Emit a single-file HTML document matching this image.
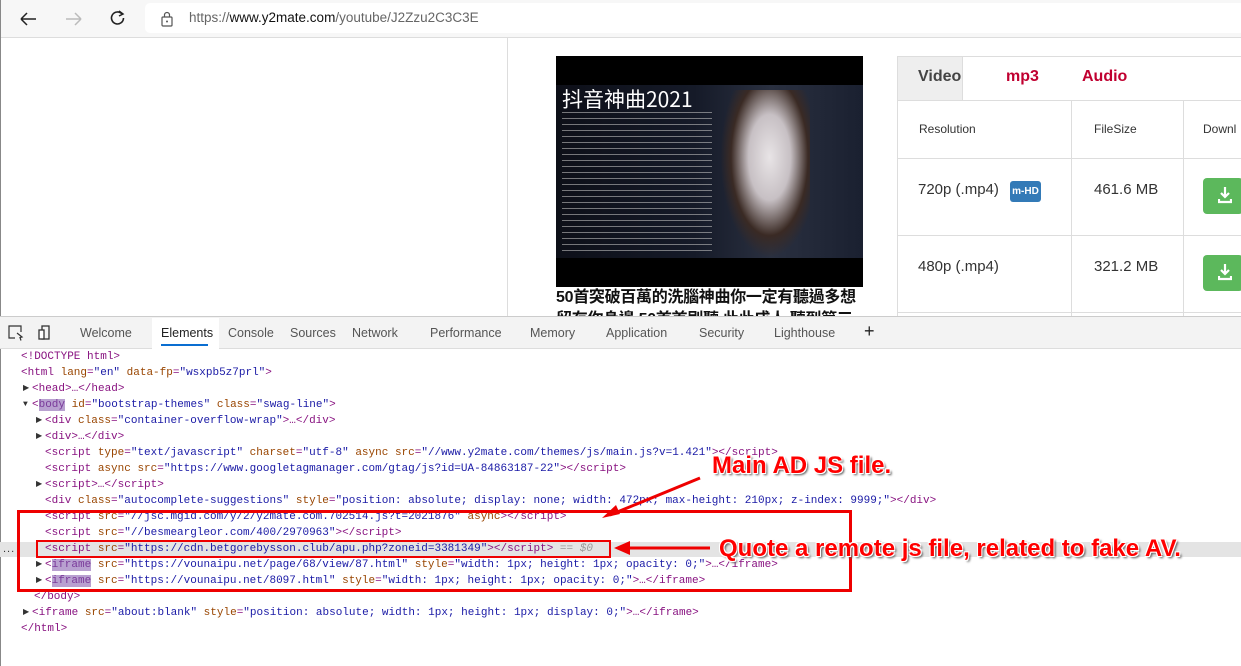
<!DOCTYPE html>
<html><head><meta charset="utf-8"><style>
*{margin:0;padding:0;box-sizing:border-box}
body{width:1241px;height:666px;overflow:hidden;background:#fff;font-family:"Liberation Sans",sans-serif;position:relative}
.a{position:absolute}
.l{position:absolute;font-family:"Liberation Mono",monospace;font-size:11px;line-height:16px;white-space:pre;color:#881280}
.tr{position:absolute;font-size:8px;color:#333;margin-left:-9px;line-height:16px}
.t{color:#881280}.n{color:#994500}.v{color:#1a1aa6}
.tab{position:absolute;top:326px;font-size:12.5px;color:#555}
.lbl{position:absolute;font-family:"Liberation Sans",sans-serif;font-weight:bold;color:#f00;font-size:24px;text-shadow:1px 1px 0 #fff,-1px -1px 0 #fff,1px -1px 0 #fff,-1px 1px 0 #fff,2px 2px 2px #555;white-space:nowrap}
.hl{background:#b8a0d0;color:#7a3a9a}
</style></head><body>
<div class="a" style="left:0;top:0;width:1241px;height:38px;background:#f7f7f7;border-bottom:1px solid #ddd"></div>
<div class="a" style="left:0;top:0;width:1px;height:666px;background:#888"></div>
<svg class="a" style="left:18px;top:8px" width="110" height="22" viewBox="0 0 110 22">
<path d="M3 11h15M3 11l6-6M3 11l6 6" stroke="#222" stroke-width="1.5" fill="none"/>
<path d="M48 11h15M63 11l-6-6M63 11l-6 6" stroke="#bbb" stroke-width="1.5" fill="none"/>
<path d="M104 6a6 6 0 1 0 1.5 4" stroke="#222" stroke-width="1.6" fill="none"/><path d="M101 3l4 3-4 2" stroke="#222" stroke-width="1.5" fill="none"/>
</svg>
<div class="a" style="left:145px;top:3px;width:1100px;height:30px;background:#fff;border-radius:5px"></div>
<svg class="a" style="left:160px;top:11px" width="14" height="16"><rect x="2" y="6" width="10" height="9" rx="1" fill="none" stroke="#555" stroke-width="1.2"/><path d="M4.5 6V4a2.5 2.5 0 0 1 5 0v2" fill="none" stroke="#555" stroke-width="1.2"/><circle cx="7" cy="10.5" r="1" fill="#555"/></svg>
<div class="a" style="left:189px;top:10px;font-size:13.5px;color:#666">https://<span style="color:#111">www.y2mate.com</span>/youtube/J2Zzu2C3C3E</div>
<div class="a" style="left:507px;top:38px;width:1px;height:280px;background:#ddd"></div>
<div class="a" style="left:556px;top:56px;width:307px;height:231px;background:#000"></div>
<div class="a" style="left:556px;top:85px;width:307px;height:173px;background:linear-gradient(90deg,#0d0f18 0%,#151a28 45%,#2a3040 70%,#1a2030 100%)"></div>
<div class="a" style="left:720px;top:90px;width:90px;height:168px;background:radial-gradient(ellipse at 55% 40%,#e8e4e6 0%,#c7c0c4 30%,#3a2a24 55%,transparent 70%)"></div>
<div class="a" style="left:562px;top:84px;color:#fff;font-size:21px;font-family:'Noto Sans CJK SC',sans-serif">抖音神曲2021</div>
<div class="a" style="left:562px;top:112px;width:150px;height:142px;background:repeating-linear-gradient(180deg,#bbb 0 1px,transparent 1px 6px);opacity:.6"></div>
<div class="a" style="left:556px;top:287px;width:307px;height:29px;overflow:hidden;font-family:'Liberation Sans','Noto Sans CJK TC',sans-serif;font-weight:bold;font-size:16px;line-height:22px;color:#111;white-space:nowrap;letter-spacing:-0.3px">50首突破百萬的洗腦神曲你一定有聽過多想<br>留存你身邊 50首首刷聽 此此成人 聽到第三</div>
<div class="a" style="left:897px;top:56px;width:350px;height:262px;border:1px solid #ddd"></div>
<div class="a" style="left:897px;top:56px;width:66px;height:45px;background:#eee;border:1px solid #ddd"></div>
<div class="a" style="left:918px;top:68px;font-size:16px;font-weight:bold;color:#444">Video</div>
<div class="a" style="left:1006px;top:68px;font-size:16px;font-weight:bold;color:#c00030">mp3</div>
<div class="a" style="left:1082px;top:68px;font-size:16px;font-weight:bold;color:#c00030">Audio</div>
<div class="a" style="left:897px;top:100px;width:350px;height:1px;background:#ddd"></div>
<div class="a" style="left:897px;top:158px;width:350px;height:1px;background:#ddd"></div>
<div class="a" style="left:897px;top:235px;width:350px;height:1px;background:#ddd"></div>
<div class="a" style="left:897px;top:312px;width:350px;height:1px;background:#ddd"></div>
<div class="a" style="left:1071px;top:100px;width:1px;height:218px;background:#ddd"></div>
<div class="a" style="left:1183px;top:100px;width:1px;height:218px;background:#ddd"></div>
<div class="a" style="left:919px;top:122px;font-size:12px;color:#333">Resolution</div>
<div class="a" style="left:1094px;top:122px;font-size:12px;color:#333">FileSize</div>
<div class="a" style="left:1203px;top:122px;font-size:12px;color:#333">Downl</div>
<div class="a" style="left:918px;top:181px;font-size:15px;color:#333">720p (.mp4)</div>
<div class="a" style="left:1010px;top:181px;width:31px;height:21px;background:#337ab7;border-radius:3px;color:#fff;font-size:10px;font-weight:bold;text-align:center;line-height:21px">m-HD</div>
<div class="a" style="left:1094px;top:181px;font-size:15px;color:#333">461.6 MB</div>
<div class="a" style="left:918px;top:258px;font-size:15px;color:#333">480p (.mp4)</div>
<div class="a" style="left:1094px;top:258px;font-size:15px;color:#333">321.2 MB</div>
<div class="a" style="left:1203px;top:178px;width:40px;height:36px;background:#5cb85c;border-radius:4px"></div>
<div class="a" style="left:1203px;top:255px;width:40px;height:36px;background:#5cb85c;border-radius:4px"></div>
<svg class="a" style="left:1218px;top:186px" width="14" height="18"><path d="M7 1v10M3 7l4 4 4-4M1 13v3h12v-3" stroke="#fff" stroke-width="2.2" fill="none"/></svg>
<svg class="a" style="left:1218px;top:263px" width="14" height="18"><path d="M7 1v10M3 7l4 4 4-4M1 13v3h12v-3" stroke="#fff" stroke-width="2.2" fill="none"/></svg>
<div class="a" style="left:0;top:316px;width:1241px;height:33px;background:#f3f3f3;border-top:1px solid #ccc;border-bottom:1px solid #ddd"></div>
<div class="a" style="left:152px;top:318px;width:67px;height:31px;background:#fff"></div>
<div class="a" style="left:161px;top:344px;width:47px;height:2px;background:#0a6ed1"></div>
<svg class="a" style="left:8px;top:325px" width="42" height="16"><path d="M7 13H1V1h12v6" stroke="#333" stroke-width="1.2" fill="none"/><path d="M9 8l5 4-2 .5 1 3" stroke="#333" stroke-width="1.2" fill="none"/><rect x="34" y="1" width="7" height="13" fill="none" stroke="#333" stroke-width="1.3"/><rect x="31" y="5" width="5" height="9" fill="#fff" stroke="#333" stroke-width="1.3"/></svg>
<div class="tab" style="left:80px">Welcome</div>
<div class="tab" style="left:161px;color:#222">Elements</div>
<div class="tab" style="left:228px">Console</div>
<div class="tab" style="left:290px">Sources</div>
<div class="tab" style="left:352px">Network</div>
<div class="tab" style="left:430px">Performance</div>
<div class="tab" style="left:530px">Memory</div>
<div class="tab" style="left:606px">Application</div>
<div class="tab" style="left:699px">Security</div>
<div class="tab" style="left:774px">Lighthouse</div>
<div class="tab" style="left:864px;font-size:18px;top:321px;color:#222">+</div>
<div class="a" style="left:0;top:542px;width:1241px;height:15px;background:#e4e4e4"></div>
<div class="a" style="left:3px;top:543px;font-size:11px;color:#333;letter-spacing:1px">...</div>

<div class="l" style="left:21px;top:349px">&lt;!DOCTYPE html&gt;</div>
<div class="l" style="left:21px;top:365px">&lt;html <span class="n">lang</span>=<span class="v">"en"</span> <span class="n">data-fp</span>=<span class="v">"wsxpb5z7prl"</span>&gt;</div>
<div class="l" style="left:32px;top:381px"><span class="tr">▶</span>&lt;head&gt;…&lt;/head&gt;</div>
<div class="l" style="left:32px;top:397px"><span class="tr">▼</span>&lt;<span class="hl">body</span> <span class="n">id</span>=<span class="v">"bootstrap-themes"</span> <span class="n">class</span>=<span class="v">"swag-line"</span>&gt;</div>
<div class="l" style="left:45px;top:413px"><span class="tr">▶</span>&lt;div <span class="n">class</span>=<span class="v">"container-overflow-wrap"</span>&gt;…&lt;/div&gt;</div>
<div class="l" style="left:45px;top:429px"><span class="tr">▶</span>&lt;div&gt;…&lt;/div&gt;</div>
<div class="l" style="left:45px;top:445px">&lt;script <span class="n">type</span>=<span class="v">"text/javascript"</span> <span class="n">charset</span>=<span class="v">"utf-8"</span> <span class="n">async</span> <span class="n">src</span>=<span class="v">"//www.y2mate.com/themes/js/main.js?v=1.421"</span>&gt;&lt;/script&gt;</div>
<div class="l" style="left:45px;top:461px">&lt;script <span class="n">async</span> <span class="n">src</span>=<span class="v">"https://www.googletagmanager.com/gtag/js?id=UA-84863187-22"</span>&gt;&lt;/script&gt;</div>
<div class="l" style="left:45px;top:477px"><span class="tr">▶</span>&lt;script&gt;…&lt;/script&gt;</div>
<div class="l" style="left:45px;top:493px">&lt;div <span class="n">class</span>=<span class="v">"autocomplete-suggestions"</span> <span class="n">style</span>=<span class="v">"position: absolute; display: none; width: 472px; max-height: 210px; z-index: 9999;"</span>&gt;&lt;/div&gt;</div>
<div class="l" style="left:45px;top:509px">&lt;script <span class="n">src</span>=<span class="v">"//jsc.mgid.com/y/2/y2mate.com.702514.js?t=2021876"</span> <span class="n">async</span>&gt;&lt;/script&gt;</div>
<div class="l" style="left:45px;top:525px">&lt;script <span class="n">src</span>=<span class="v">"//besmeargleor.com/400/2970963"</span>&gt;&lt;/script&gt;</div>
<div class="l" style="left:45px;top:541px">&lt;script <span class="n">src</span>=<span class="v">"https://cdn.betgorebysson.club/apu.php?zoneid=3381349"</span>&gt;&lt;/script&gt; <span style="color:#999;font-style:italic">== $0</span></div>
<div class="l" style="left:45px;top:557px"><span class="tr">▶</span>&lt;<span class="hl">iframe</span> <span class="n">src</span>=<span class="v">"https://vounaipu.net/page/68/view/87.html"</span> <span class="n">style</span>=<span class="v">"width: 1px; height: 1px; opacity: 0;"</span>&gt;…&lt;/iframe&gt;</div>
<div class="l" style="left:45px;top:573px"><span class="tr">▶</span>&lt;<span class="hl">iframe</span> <span class="n">src</span>=<span class="v">"https://vounaipu.net/8097.html"</span> <span class="n">style</span>=<span class="v">"width: 1px; height: 1px; opacity: 0;"</span>&gt;…&lt;/iframe&gt;</div>
<div class="l" style="left:34px;top:589px">&lt;/body&gt;</div>
<div class="l" style="left:32px;top:605px"><span class="tr">▶</span>&lt;iframe <span class="n">src</span>=<span class="v">"about:blank"</span> <span class="n">style</span>=<span class="v">"position: absolute; width: 1px; height: 1px; display: 0;"</span>&gt;…&lt;/iframe&gt;</div>
<div class="l" style="left:21px;top:621px">&lt;/html&gt;</div>

<div class="a" style="left:17px;top:510px;width:835px;height:82px;border:3px solid #e00"></div>
<div class="a" style="left:36px;top:540px;width:575px;height:18px;border:2.5px solid #e00"></div>
<svg class="a" style="left:0;top:0" width="1241" height="666">
<path d="M700 478L610 515" stroke="#e00" stroke-width="3"/><path d="M602 518l14-13 4 9z" fill="#e00"/>
<path d="M710 548H625" stroke="#e00" stroke-width="3"/><path d="M614 548l16-7v14z" fill="#e00"/>
</svg>
<div class="lbl" style="left:712px;top:452px">Main AD JS file.</div>
<div class="lbl" style="left:719px;top:535px">Quote a remote js file, related to fake AV.</div>
</body></html>
